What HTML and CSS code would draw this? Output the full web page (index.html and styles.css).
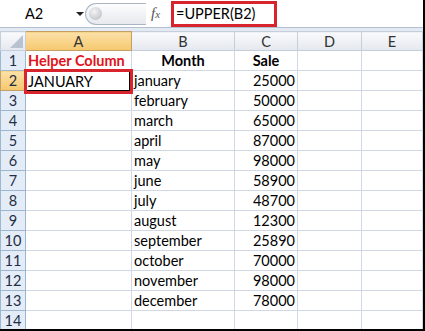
FILE: index.html
```html
<!DOCTYPE html>
<html lang="en">
  <head>
    <meta charset="UTF-8" />
    <title>UPPER helper column</title>
    <link rel="stylesheet" href="styles.css">
  </head>
  <body>
    <div class="sheet">
      <div class="formula-bar">
        <div class="name-box">
          <span class="cell-ref">A2</span>
          <span class="drop-arrow"></span>
        </div>
        <div class="pill">
          <span class="knob"></span>
        </div>
        <span class="fx">f<small>x</small></span>
        <div class="formula">=UPPER(B2)</div>
      </div>
      <div class="band"></div>

      <table class="grid">
        <colgroup>
          <col class="c-hdr" />
          <col class="c-a" />
          <col class="c-b" />
          <col class="c-c" />
          <col class="c-d" />
          <col />
        </colgroup>
        <thead>
          <tr>
            <th class="corner"><span class="tri"></span></th>
            <th class="sel">A</th>
            <th>B</th>
            <th>C</th>
            <th>D</th>
            <th>E</th>
          </tr>
        </thead>
        <tbody id="rows"></tbody>
      </table>
    </div>

    <script>
      const months = [
        ["january", 25000],
        ["february", 50000],
        ["march", 65000],
        ["april", 87000],
        ["may", 98000],
        ["june", 58900],
        ["july", 48700],
        ["august", 12300],
        ["september", 25890],
        ["october", 70000],
        ["november", 98000],
        ["december", 78000],
      ];

      const tbody = document.getElementById("rows");

      function addRow(num, a, b, c, rowClass) {
        const tr = document.createElement("tr");
        tr.innerHTML =
          `<th class="${rowClass || ""}">${num}</th>` +
          `<td>${a}</td><td>${b}</td><td class="num">${c}</td><td></td><td></td>`;
        tbody.appendChild(tr);
        return tr;
      }

      const head = addRow(1, "Helper Column", "Month", "Sale");
      head.children[1].className = "helper";
      head.children[2].className = "bold center";
      head.children[3].className = "bold center";

      months.forEach((m, i) => {
        const tr = addRow(i + 2, "", m[0], m[1], i === 0 ? "sel" : "");
        if (i === 0) {
          tr.children[1].innerHTML = '<div class="active">JANUARY</div>';
        }
      });

      addRow(14, "", "", "");
    </script>
  </body>
</html>
```

FILE: styles.css
```css
body {
  margin: 0;
  font-family: Lato, "Liberation Sans", sans-serif;
  background: #fff;
}
.sheet {
  width: 423px;
  height: 329px;
  border-right: 2px solid #000;
  border-bottom: 2px solid #000;
  overflow: hidden;
}

/* formula bar */
.formula-bar {
  height: 27px;
  display: flex;
  align-items: center;
  background: #fff;
}
.name-box {
  width: 85px;
  display: flex;
  align-items: center;
  font-size: 14.5px;
}
.cell-ref {
  margin-left: 25px;
}
.drop-arrow {
  margin-left: 33px;
  width: 0;
  height: 0;
  border-left: 4px solid transparent;
  border-right: 4px solid transparent;
  border-top: 4px solid #222;
}
.pill {
  width: 60px;
  height: 20px;
  border: 1px solid #a9b5c4;
  border-right: none;
  border-radius: 11px 0 0 11px;
  background: linear-gradient(#fdfdfd, #e6e9ee);
  display: flex;
  align-items: center;
}
.knob {
  margin-left: 3px;
  width: 13px;
  height: 13px;
  border-radius: 50%;
  background: radial-gradient(circle at 40% 35%, #f4f4f4, #b4b8be);
}
.fx {
  margin-left: 5px;
  width: 20px;
  font-family: "Liberation Serif", serif;
  font-style: italic;
  font-size: 15px;
  color: #555;
}
.fx small {
  font-size: 11px;
}
.formula {
  width: 98px;
  height: 20px;
  border: 3px solid #d8242c;
  font-size: 14.5px;
  line-height: 20px;
  padding-left: 2px;
}
.band {
  height: 3px;
  border-top: 1px solid #b3c0d2;
  background: #e3eaf3;
}

/* grid */
.grid {
  border-collapse: collapse;
  table-layout: fixed;
  width: 423px;
  font-size: 14.5px;
}
.c-hdr { width: 25px; }
.c-a { width: 106px; }
.c-b { width: 103px; }
.c-c { width: 63px; }
.c-d { width: 64px; }
.grid th,
.grid td {
  height: 19px;
  padding: 0 2px;
  border: 1px solid #d0d7e5;
  white-space: nowrap;
  overflow: visible;
}
.grid thead th {
  height: 18px;
  font-weight: normal;
  color: #333;
  background: linear-gradient(#f9fafc, #e4e8ee);
  border-color: #c5cedb;
}
.grid tbody th {
  font-weight: normal;
  color: #1f2f45;
  background: #e4ecf7;
  border-color: #9eb6ce;
  text-align: center;
}
.grid th.sel,
.grid thead th.sel {
  background: linear-gradient(#fbe1a8, #f6c86e);
  border-color: #c2a065;
}
.corner {
  position: relative;
}
.tri {
  position: absolute;
  right: 2px;
  bottom: 2px;
  width: 0;
  height: 0;
  border-left: 13px solid transparent;
  border-bottom: 13px solid #b9c3cf;
}
.helper {
  color: #e1131b;
  font-weight: bold;
}
.bold {
  font-weight: bold;
}
.center {
  text-align: center;
}
.num {
  text-align: right;
}
td:has(.active) {
  position: relative;
}
.active {
  position: absolute;
  left: -2px;
  top: -2px;
  right: -2px;
  bottom: -4px;
  border: 3px solid #d8242c;
  box-shadow: inset -1px -1px 0 #000;
  padding-left: 1px;
  line-height: 19px;
}
```
